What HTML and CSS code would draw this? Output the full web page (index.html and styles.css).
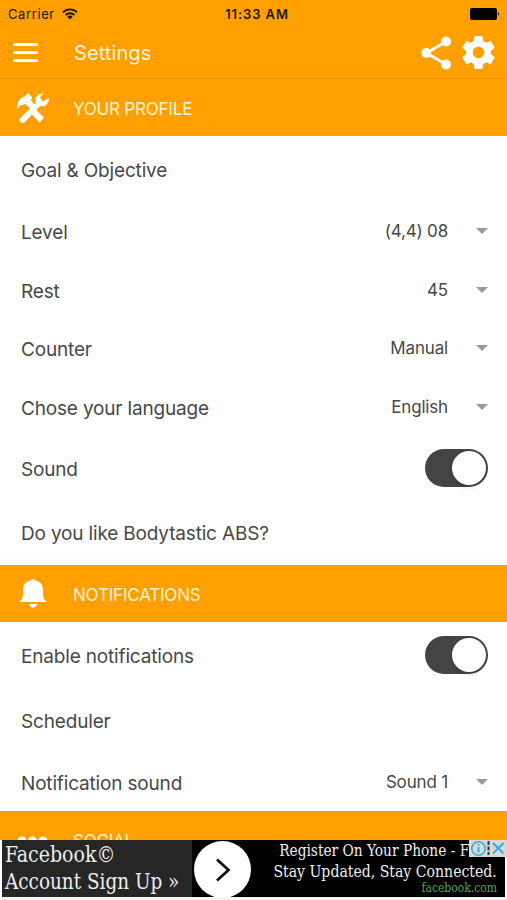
FILE: index.html
```html
<!DOCTYPE html>
<html lang="en">
<head>
  <meta charset="UTF-8" />
  <meta name="viewport" content="width=device-width, initial-scale=1.0" />
  <title>Settings</title>
  <link rel="stylesheet" href="styles.css">
</head>
<body>
  <div class="screen">
    <header>
      <div class="status-bar">
        <div class="carrier">
          <span>Carrier</span>
          <svg width="16" height="12" viewBox="0 0 16 12" fill="none" stroke="#211500" stroke-width="1.9">
            <path d="M1 4.2a10 10 0 0 1 14 0M3.6 7a6.3 6.3 0 0 1 8.8 0" />
            <path d="M8 11.5L5.4 8.8a3.7 3.7 0 0 1 5.2 0z" fill="#211500" stroke="none" />
          </svg>
        </div>
        <span class="clock">11:33 AM</span>
        <svg class="battery" width="30" height="12" viewBox="0 0 30 12">
          <rect width="27" height="12" rx="2" />
          <path d="M28 4q2 2 0 4z" />
        </svg>
      </div>
      <div class="nav-bar">
        <div class="menu-btn"><i></i><i></i><i></i></div>
        <h1>Settings</h1>
        <svg class="share" width="30" height="34" viewBox="0 0 30 34" fill="#fff">
          <path d="M25 5.500L5.500 17L25 28.500" fill="none" stroke="#fff" stroke-width="3" />
          <circle cx="25" cy="5.500" r="5" />
          <circle cx="5.200" cy="17" r="5" />
          <circle cx="25" cy="28.500" r="5" />
        </svg>
        <svg class="gear" width="33" height="33" viewBox="2 2 20 20" fill="#fff">
          <path d="M19.430 12.980c.040-.320.070-.640.070-.980s-.030-.660-.070-.980l2.110-1.650c.190-.150.240-.420.120-.640l-2-3.460c-.120-.220-.390-.300-.610-.220l-2.490 1c-.520-.400-1.080-.730-1.690-.980l-.380-2.650C14.460 2.180 14.250 2 14 2h-4c-.250 0-.460.180-.490.420l-.380 2.650c-.610.250-1.170.590-1.690.980l-2.490-1c-.230-.090-.490 0-.610.220l-2 3.460c-.130.220-.070.490.120.640l2.110 1.650c-.040.320-.070.650-.070.980s.030.660.070.980l-2.110 1.650c-.190.150-.240.420-.120.640l2 3.460c.120.220.390.300.610.220l2.490-1c.520.400 1.080.730 1.690.980l.380 2.650c.030.240.240.420.490.420h4c.250 0 .460-.180.490-.420l.380-2.650c.610-.250 1.170-.590 1.690-.980l2.490 1c.230.090.490 0 .610-.220l2-3.460c.120-.220.070-.490-.120-.640l-2.110-1.650zM12 15.500c-1.930 0-3.500-1.570-3.500-3.500s1.570-3.500 3.500-3.500 3.500 1.570 3.500 3.500-1.570 3.500-3.500 3.500z" />
        </svg>
      </div>
    </header>

    <div class="section-title">
      <svg width="34" height="32" viewBox="0 0 34 32" fill="#fff">
        <path d="M1.500 18C.500 10 4 5 9 4.500L12 1l4 4-1 3.500 4 4.500-4.500 4.500-5-5.500-3 1c-3 0-4 2-5 5z" />
        <path d="M18 16l10 9.500-4.500 5L13.500 20z" />
        <path d="M19.500 10c-1-5 3-9 8-8.500L24 5.500l3 4 6-3.500c0 6-4 9-9 8L9.500 29.500q-3 3-5.500 0-1.500-2 1-4.500L19.500 11.500z" />
      </svg>
      <h2>YOUR PROFILE</h2>
    </div>
    <div class="row goal"><span>Goal &amp; Objective</span></div>
    <div class="row"><span>Level</span><div class="select">(4,4) 08</div></div>
    <div class="row"><span>Rest</span><div class="select">45</div></div>
    <div class="row"><span>Counter</span><div class="select">Manual</div></div>
    <div class="row"><span>Chose your language</span><div class="select">English</div></div>
    <div class="row sound"><span>Sound</span><div class="toggle"></div></div>
    <div class="row like"><span>Do you like Bodytastic ABS?</span></div>

    <div class="section-title">
      <svg width="34" height="32" viewBox="0 0 34 32" fill="#fff">
        <path d="M17 2q2 0 2.500 1.500c5 1 7.500 4.500 7.500 9V18q0 4 4 7H3q4-3 4-7v-5.500c0-4.500 2.500-8 7.500-9Q15 2 17 2z" />
        <path d="M13 27h8q-1 3.500-4 3.500T13 27z" />
      </svg>
      <h2>NOTIFICATIONS</h2>
    </div>
    <div class="row enable"><span>Enable notifications</span><div class="toggle"></div></div>
    <div class="row scheduler"><span>Scheduler</span></div>
    <div class="row alert-sound"><span>Notification sound</span><div class="select">Sound 1</div></div>

    <div class="section-title social">
      <svg width="34" height="32" viewBox="0 0 34 32" fill="#fff">
        <circle cx="6" cy="16" r="4.500" />
        <circle cx="16.500" cy="16" r="4.500" />
        <circle cx="27" cy="16" r="4.500" />
      </svg>
      <h2>SOCIAL</h2>
    </div>

    <div class="ad">
      <div class="ad-left">
        <p class="ad-fb">Facebook©</p>
        <p class="ad-signup">Account Sign Up »</p>
      </div>
      <div class="ad-arrow">
        <svg width="16" height="24" viewBox="0 0 16 24" fill="none" stroke="#111" stroke-width="2.800">
          <path d="M2 1.500L13.500 12L2 22.500" />
        </svg>
      </div>
      <div class="ad-right">
        <p class="ad-line1">Register On Your Phone - F</p>
        <p class="ad-line2">Stay Updated, Stay Connected.</p>
        <p class="ad-link">facebook.com</p>
      </div>
      <div class="ad-choices">
        <svg width="38" height="17" viewBox="0 0 38 17" fill="none" stroke="#28b4d4" stroke-width="1.600">
          <circle cx="9.500" cy="8.500" r="6.700" />
          <path d="M9.500 7.300v5M9.500 4v1.800" stroke-width="2" />
          <path d="M19.500 1v14" stroke="#333" stroke-width="2" stroke-dasharray="4 1.500" />
          <path d="M24 3l10.500 10.500M34.500 3L24 13.500" stroke-width="2" />
        </svg>
      </div>
    </div>
  </div>
</body>
</html>
```
FILE: styles.css
```css
body {
  font-family: Inter, "Liberation Sans", sans-serif;
  background: #fff;
  color: #484848;
  margin: 0;
}
h1, h2, p {
  margin: 0;
  font-weight: 400;
}
svg {
  display: block;
  flex: none;
}
.screen {
  position: relative;
  height: 900px;
  overflow: hidden;
}
header {
  height: 79px;
  box-sizing: border-box;
  background: #ffa000;
  border-bottom: 1px solid #e29108;
}
.status-bar {
  display: grid;
  grid-template-columns: 1fr auto 1fr;
  align-items: center;
  height: 27px;
  padding: 0 7px 0 8px;
  font-size: 13px;
  color: #211500;
}
.carrier {
  display: flex;
  align-items: center;
  gap: 7px;
  letter-spacing: 0.6px;
}
.clock {
  padding-left: 6px;
  font-weight: 600;
  letter-spacing: 0.9px;
}
.battery {
  justify-self: end;
  fill: #000;
}
.nav-bar {
  display: flex;
  align-items: center;
  height: 51px;
  padding: 0 12px 0 13px;
  color: #fff;
}
.menu-btn {
  display: flex;
  flex-direction: column;
  gap: 5px;
  width: 25px;
  margin-right: 36px;
}
.menu-btn i {
  height: 3px;
  border-radius: 1px;
  background: #fff;
}
h1 {
  flex: 1;
  font-size: 20px;
  letter-spacing: 0.1px;
  color: #fff5dc;
}
.share {
  margin-right: 11px;
}
.section-title {
  display: flex;
  align-items: center;
  height: 57px;
  padding-left: 16px;
  background: #ffa000;
}
.section-title h2 {
  padding-top: 3px;
  margin-left: 23px;
  font-size: 17px;
  letter-spacing: -0.2px;
  color: #fff3d4;
}
.row {
  display: flex;
  align-items: center;
  justify-content: space-between;
  height: 58.7px;
  padding: 0 19px 0 21px;
  font-size: 19px;
  letter-spacing: -0.17px;
}
.row.goal {
  height: 67px;
  padding-top: 2px;
  box-sizing: border-box;
}
.row.sound {
  height: 61px;
}
.row.like {
  height: 66.2px;
  padding-top: 4px;
  box-sizing: border-box;
}
.row.enable {
  height: 67px;
}
.row.enable span, .row.sound span {
  padding-top: 2px;
}
.row.scheduler {
  height: 63px;
  padding-top: 2px;
  box-sizing: border-box;
}
.row.alert-sound {
  padding-top: 4px;
  height: 59px;
  box-sizing: border-box;
}
.select {
  display: flex;
  align-items: center;
  gap: 28px;
  margin-top: -3px;
  font-size: 17px;
}
.select::after {
  content: "";
  border: 6px solid transparent;
  border-top-color: #999;
  border-bottom: 0;
}
.toggle {
  width: 63px;
  height: 38px;
  box-sizing: border-box;
  padding: 2px;
  border-radius: 19px;
  background: #444;
}
.toggle::after {
  content: "";
  display: block;
  width: 34px;
  height: 34px;
  margin-left: auto;
  border-radius: 50%;
  background: #fff;
  box-shadow: 0 3px 4px rgba(0, 0, 0, 0.1);
}
/* cut off where the ad starts */
.social {
  height: 29px;
  padding-top: 11px;
  box-sizing: border-box;
  align-items: flex-start;
  overflow: hidden;
}
.social svg {
  margin-top: 3px;
}
.social h2 {
  padding-top: 9px;
}

/* ad banner, sits over the list */
.ad {
  position: absolute;
  left: 2px;
  right: 2px;
  bottom: 0;
  display: flex;
  height: 57px;
  border-bottom: 3px solid #f4f4f4;
  background: #000;
  color: #eee;
  font-family: "DejaVu Serif Condensed", "DejaVu Serif", serif;
  font-stretch: condensed;
  white-space: nowrap;
}
.ad-left {
  width: 190px;
  padding: 1px 0 0 3px;
  box-sizing: border-box;
  background: #262626;
  font-size: 22px;
  line-height: 27px;
}
.ad p {
  width: max-content;
  transform-origin: left;
}
.ad-left .ad-fb {
  transform: scaleX(0.96);
}
.ad-left .ad-signup {
  transform: scaleX(0.93);
}
.ad-arrow {
  display: flex;
  align-items: center;
  justify-content: center;
  width: 57px;
  height: 57px;
  margin: 1px 0 0 2px;
  border-radius: 50%;
  background: #fff;
  box-shadow: 0 0 0 2px #000;
  clip-path: inset(0 -3px 1px -3px);
}
.ad-right {
  flex: 1;
  display: flex;
  flex-direction: column;
  align-items: flex-end;
  padding-right: 8px;
  font-size: 17px;
  line-height: 21px;
}
.ad-right p {
  transform-origin: right;
}
.ad-right .ad-line1 {
  margin-right: 28px;
  transform: scaleX(0.9);
}
.ad-right .ad-line2 {
  transform: scaleX(0.92);
}
.ad-right .ad-link {
  font-size: 12px;
  line-height: 13px;
  color: #4fa850;
}
.ad-choices {
  position: absolute;
  top: 0;
  right: -2px;
  background: #d8d8d8;
}
```
